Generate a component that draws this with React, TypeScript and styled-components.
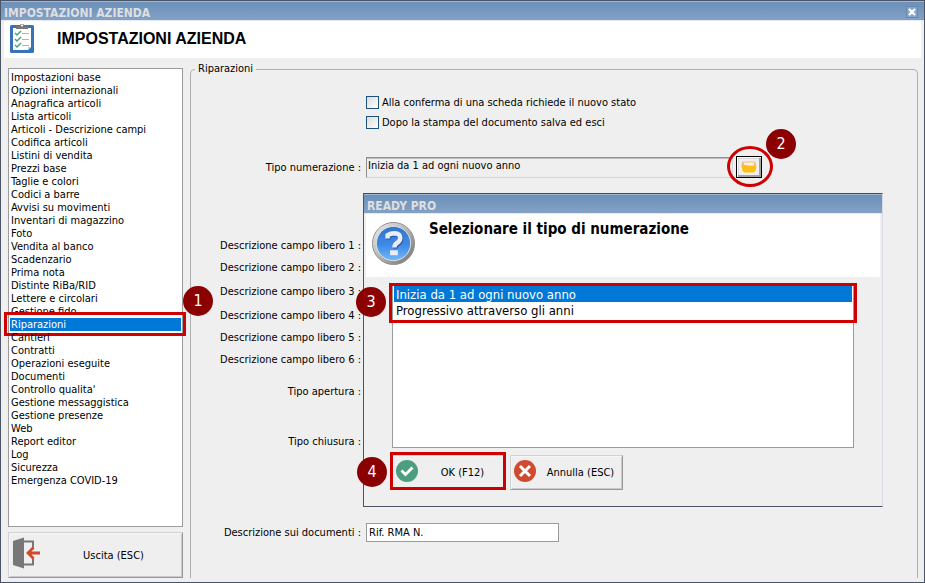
import React, { useState } from "react";
import styled, { createGlobalStyle, css } from "styled-components";

const uiFont = `"DejaVu Sans Condensed", Tahoma, sans-serif`;

const GlobalStyle = createGlobalStyle`
  *, *::before, *::after { box-sizing: border-box; }
  body { margin: 0; background: #efefef; }
  body, button, input { font: 11px/13px ${uiFont}; color: #000; }
`;

const Window = styled.div`
  display: flex;
  flex-direction: column;
  min-height: 100vh;
  border: 1px solid #4b5464;
  background: #efefef;
`;

const TitleBar = styled.div`
  display: flex;
  align-items: center;
  justify-content: space-between;
  height: 20px;
  padding: 4px 6px 0 3px;
  border-top: 1px solid #9fb8d3;
  border-bottom: 1px solid #e3eaf3;
  background: linear-gradient(#6c90b9, #82a1c5);
  color: #dfdfdf;
  font-size: 12px;
  line-height: 14px;
  font-weight: bold;
`;

const CloseButton = styled.button`
  display: flex;
  padding: 1px;
  border: 1px solid #6488b0;
  background: #86a5c7;
  margin-top: -3px;
`;

const Header = styled.header`
  display: flex;
  align-items: center;
  gap: 22px;
  height: 37px;
  margin: 0 3px;
  padding: 0 0 2px 5px;
  background: #fff;
`;

const PageTitle = styled.h1`
  margin: 0;
  font: bold 16px/20px "Liberation Sans", Arial, sans-serif;
`;

const Body = styled.main`
  display: grid;
  grid-template-columns: 175px 1fr;
  gap: 7px;
  flex: 1;
  padding: 4px 6px 4px 7px;
`;

const Sidebar = styled.div`
  display: flex;
  flex-direction: column;
  gap: 5px;
  padding-top: 6px;
`;

const SectionList = styled.ul`
  flex: 1;
  margin: 0;
  padding: 2px 1px;
  list-style: none;
  border: 1px solid #9b9b9b;
  background: #fff;
`;

const Section = styled.li<{ $selected: boolean }>`
  position: relative;
  height: 13px;
  padding-left: 1px;
  white-space: nowrap;
  cursor: default;
  ${(p) => p.$selected && css`background: #0078d7; color: #fff;`}
`;

const raised = css`
  border: 1px solid;
  border-color: #d2d2d2 #999 #999 #d2d2d2;
  box-shadow: inset 1px 1px #f6f6f6, inset -1px -1px #c9c9d0;
  background: #efefef;
`;

const ActionButton = styled.button<{ $large?: boolean }>`
  ${raised}
  display: flex;
  align-items: center;
  height: ${(p) => (p.$large ? "46px" : "35px")};
  width: ${(p) => (p.$large ? "100%" : "113px")};
  padding: ${(p) => (p.$large ? "0 3px 0 4px" : "0 3px")};
`;

const ActionIcon = styled.span`
  display: flex;
  padding-bottom: 4px;
`;

const ActionText = styled.span`
  flex: 1;
  padding-left: 6px;
  text-align: center;
  white-space: nowrap;
`;

const Group = styled.fieldset`
  min-width: 0;
  margin: 0;
  padding: 0;
  border: 1px solid #b0b0b0;
  border-bottom: 0;
  border-radius: 5px 5px 0 0;
`;

const Legend = styled.legend`
  margin-left: 4px;
  padding: 0 3px;
  line-height: 14px;
`;

const Panel = styled.div`
  position: relative;
  display: flex;
  flex-direction: column;
  padding-top: 16px;
`;

const Checks = styled.div`
  display: flex;
  flex-direction: column;
  padding-left: 175px;
  margin-bottom: 24px;
`;

const CheckLabel = styled.label`
  display: flex;
  align-items: center;
  gap: 3px;
  height: 20px;
`;

const CheckBox = styled.input`
  appearance: none;
  width: 13px;
  height: 13px;
  margin: 0;
  border: 1px solid #1c5180;
  background: linear-gradient(135deg, #dcdcd7, #fff);
  &:checked { background: #1c5180; }
`;

const Row = styled.div<{ $height?: number; $after?: number }>`
  display: grid;
  grid-template-columns: 170px 1fr;
  column-gap: 5px;
  align-items: center;
  height: ${(p) => p.$height ?? 22}px;
  margin-bottom: ${(p) => p.$after ?? 0}px;
`;

const FieldLabel = styled.label`
  text-align: right;
  white-space: nowrap;
`;

const TextField = styled.input`
  width: 193px;
  height: 19px;
  padding: 0 2px;
  border: 1px solid #9b9b9b;
  background: #fff;
`;

const Picker = styled.div`
  display: flex;
  align-items: center;
  gap: 3px;
  padding-right: 155px;
`;

const PickerField = styled.input`
  flex: 1;
  min-width: 0;
  height: 21px;
  padding: 0 1px 3px;
  border: 1px solid;
  border-color: #8f8f8f #d4d4dc #d4d4dc #8f8f8f;
  box-shadow: inset 0 1px #c0c0c0;
  background: #efefef;
`;

const PickerButton = styled.button`
  position: relative;
  display: flex;
  align-items: center;
  justify-content: center;
  width: 26px;
  height: 22px;
  padding: 0;
  border: 1px solid #000;
  background: #efefef;
  box-shadow: inset 1px 1px #fff, inset -2px -2px #a3a3a3, inset 2px 2px #d8d8d8;
`;

const ring = css`
  position: absolute;
  pointer-events: none;
  border: 3px solid #cf0000;
`;

const SectionFrame = styled.span`
  ${ring}
  inset: -6px -5px -5px -6px;
`;

const OvalFrame = styled.span`
  ${ring}
  inset: -11px -12px -10px -10px;
  border-radius: 50%;
`;

const OptionsFrame = styled.span`
  ${ring}
  inset: -3px -4px auto -4px;
  height: 40px;
`;

const OkFrame = styled.span`
  ${ring}
  inset: -3px -1px 0 -2px;
`;

const Step = styled.span<{ $x: number; $y: number }>`
  position: absolute;
  left: ${(p) => p.$x}px;
  top: ${(p) => p.$y}px;
  z-index: 2;
  width: 30px;
  height: 30px;
  border-radius: 50%;
  background: #8b0000;
  color: #fff;
  font-size: 16px;
  line-height: 30px;
  text-align: center;
`;

const Dialog = styled.section`
  position: absolute;
  top: 117px;
  left: 172px;
  right: 34px;
  border: 1px solid;
  border-color: #3d4c5e #d9d9e4 #4b5464 #4b5464;
  background: #efefef;
`;

const DialogHead = styled.div`
  display: flex;
  gap: 13px;
  height: 63px;
  margin: 0 2px;
  padding: 7px 5px;
  background: #fff;
`;

const DialogTitle = styled.h2`
  margin: 0;
  font-size: 15px;
  line-height: 16px;
`;

const DialogBody = styled.div`
  display: flex;
  flex-direction: column;
  gap: 7px;
  padding: 8px 28px 16px;
`;

const Options = styled.ul`
  position: relative;
  height: 163px;
  margin: 0;
  padding: 0;
  list-style: none;
  border: 1px solid #9b9b9b;
  background: #fff;
`;

const Option = styled.li<{ $selected: boolean }>`
  height: 16px;
  margin: 0 1px;
  padding-left: 2px;
  font-size: 13px;
  line-height: 18px;
  white-space: nowrap;
  cursor: default;
  ${(p) => p.$selected && css`background: #0078d7; color: #fff;`}
`;

const Buttons = styled.div`
  display: flex;
  gap: 5px;
`;

const ButtonSlot = styled.div`
  position: relative;
`;

const CloseIcon = () => (
  <svg width="8" height="8" viewBox="0 0 8 8" aria-hidden="true">
    <path d="M1 1l6 6M7 1L1 7" stroke="#fff" strokeWidth="2.2" />
  </svg>
);

const ClipboardIcon = () => (
  <svg width="26" height="31" viewBox="0 0 26 31" aria-hidden="true">
    <rect x="1" y="2" width="24" height="28" rx="1.5" fill="#3674b5" />
    <path d="M4 5h18v19l-3 3H4z" fill="#fff" />
    <path d="M19 27v-3h3z" fill="#bcd0e6" />
    <path d="M7 6V3h3a3.2 3.2 0 0 1 6 0h3v3z" fill="#777" />
    <circle cx="13" cy="2.6" r="1.1" fill="#fff" />
    {[10, 16, 22].map((y) => (
      <g key={y} fill="none">
        <path d={`M6 ${y}l2 2 4-4`} stroke="#4ba37e" strokeWidth="1.5" />
        <path d={`M13 ${y + 0.5}h7`} stroke="#b5b5b5" />
      </g>
    ))}
  </svg>
);

const ExitIcon = () => (
  <svg width="29" height="32" viewBox="0 0 29 32" aria-hidden="true">
    <path d="M11 4.500h9v7M20 20v7.500h-9" fill="none" stroke="#777" strokeWidth="2" />
    <path d="M0 4l11-3.500v31L0 28z" fill="#777" />
    <path d="M27 16H15M20.500 10.500L15 16l5.500 5.500" fill="none" stroke="#d04a2c" strokeWidth="2.800" />
  </svg>
);

const FolderIcon = () => (
  <svg width="16" height="12" viewBox="0 0 16 12" aria-hidden="true">
    <path d="M1.500.5h12.500l1 2v3H.5v-3z" fill="#f8b98a" />
    <path d="M3 1.500h10v3H3z" fill="#fff3df" />
    <path d="M.5 4h4.500l1.500 1h9L14.500 10l-2 1.500h-9L1.500 10z" fill="#fcbf16" />
  </svg>
);

const QuestionIcon = () => (
  <svg width="45" height="45" viewBox="0 0 46 46" aria-hidden="true">
    <defs>
      <linearGradient id="rim" x1="0" y1="0" x2="1" y2="1">
        <stop offset="0" stopColor="#f2f2f2" />
        <stop offset=".5" stopColor="#b4b4b4" />
        <stop offset="1" stopColor="#6d6d6d" />
      </linearGradient>
      <linearGradient id="disc" x1="0" y1="0" x2="0" y2="1">
        <stop offset="0" stopColor="#2f74d0" />
        <stop offset=".55" stopColor="#3f8be4" />
        <stop offset="1" stopColor="#72b8fb" />
      </linearGradient>
    </defs>
    <circle cx="23" cy="23" r="21.500" fill="url(#rim)" stroke="#8d8d8d" />
    <circle cx="23" cy="23" r="17.500" fill="url(#disc)" stroke="#d9dde4" />
    <path d="M17 18v-3.500q3-2 7-2 6 .3 6 5 0 3-3.500 5-2.500 1.500-2.500 4.500" fill="none" stroke="#1f5cab" strokeWidth="4.500" transform="translate(1 1)" />
    <path d="M17 18v-3.500q3-2 7-2 6 .3 6 5 0 3-3.500 5-2.500 1.500-2.500 4.500" fill="none" stroke="#ecebfa" strokeWidth="4.500" />
    <path d="M19.500 30h8v5h-8z" fill="#ecebfa" />
  </svg>
);

const OkIcon = () => (
  <svg width="22" height="22" viewBox="0 0 22 22" aria-hidden="true">
    <circle cx="11" cy="11" r="11" fill="#4b9f7c" />
    <path d="M5.500 10.500l4 4 7-7" fill="none" stroke="#fff" strokeWidth="2.800" />
  </svg>
);

const CancelIcon = () => (
  <svg width="22" height="22" viewBox="0 0 22 22" aria-hidden="true">
    <circle cx="11" cy="11" r="11" fill="#d04a30" />
    <path d="M6 6l10 10M16 6L6 16" stroke="#fff" strokeWidth="3" />
  </svg>
);

const sections = [
  "Impostazioni base", "Opzioni internazionali", "Anagrafica articoli", "Lista articoli",
  "Articoli - Descrizione campi", "Codifica articoli", "Listini di vendita", "Prezzi base",
  "Taglie e colori", "Codici a barre", "Avvisi su movimenti", "Inventari di magazzino", "Foto",
  "Vendita al banco", "Scadenzario", "Prima nota", "Distinte RiBa/RID", "Lettere e circolari",
  "Gestione fido", "Riparazioni", "Cantieri", "Contratti", "Operazioni eseguite", "Documenti",
  "Controllo qualita'", "Gestione messaggistica", "Gestione presenze", "Web", "Report editor",
  "Log", "Sicurezza", "Emergenza COVID-19",
];

const numbering = ["Inizia da 1 ad ogni nuovo anno", "Progressivo attraverso gli anni"];

const fields = [
  { id: "libero1", label: "Descrizione campo libero 1 :" },
  { id: "libero2", label: "Descrizione campo libero 2 :" },
  { id: "libero3", label: "Descrizione campo libero 3 :", height: 26 },
  { id: "libero4", label: "Descrizione campo libero 4 :" },
  { id: "libero5", label: "Descrizione campo libero 5 :" },
  { id: "libero6", label: "Descrizione campo libero 6 :", after: 10 },
  { id: "apertura", label: "Tipo apertura :", after: 28 },
  { id: "chiusura", label: "Tipo chiusura :", after: 69 },
];

export default function App() {
  const [choice, setChoice] = useState(0);
  return (
    <Window>
      <GlobalStyle />
      <TitleBar>
        IMPOSTAZIONI AZIENDA
        <CloseButton aria-label="Chiudi"><CloseIcon /></CloseButton>
      </TitleBar>
      <Header>
        <ClipboardIcon />
        <PageTitle>IMPOSTAZIONI AZIENDA</PageTitle>
      </Header>
      <Body>
        <Sidebar>
          <SectionList role="listbox" aria-label="Sezioni">
            {sections.map((name) => {
              const selected = name === "Riparazioni";
              return (
                <Section key={name} role="option" aria-selected={selected} $selected={selected}>
                  {name}
                  {selected && <SectionFrame />}
                  {selected && <Step $x={173} $y={-32}>1</Step>}
                </Section>
              );
            })}
          </SectionList>
          <ActionButton $large>
            <ActionIcon><ExitIcon /></ActionIcon>
            <ActionText>Uscita (ESC)</ActionText>
          </ActionButton>
        </Sidebar>
        <Group>
          <Legend>Riparazioni</Legend>
          <Panel>
            <Checks>
              <CheckLabel><CheckBox type="checkbox" />Alla conferma di una scheda richiede il nuovo stato</CheckLabel>
              <CheckLabel><CheckBox type="checkbox" />Dopo la stampa del documento salva ed esci</CheckLabel>
            </Checks>
            <Row $after={56}>
              <FieldLabel htmlFor="numerazione">Tipo numerazione :</FieldLabel>
              <Picker>
                <PickerField id="numerazione" readOnly value={numbering[choice]} />
                <PickerButton aria-label="Seleziona">
                  <FolderIcon />
                  <OvalFrame />
                  <Step $x={29} $y={-28}>2</Step>
                </PickerButton>
              </Picker>
            </Row>
            {fields.map((f) => (
              <Row key={f.id} $height={f.height} $after={f.after}>
                <FieldLabel htmlFor={f.id}>{f.label}</FieldLabel>
                <TextField id={f.id} />
              </Row>
            ))}
            <Row>
              <FieldLabel htmlFor="documenti">Descrizione sui documenti :</FieldLabel>
              <TextField id="documenti" defaultValue="Rif. RMA N." />
            </Row>
            <Dialog role="dialog" aria-labelledby="dialog-title">
              <TitleBar>READY PRO</TitleBar>
              <DialogHead>
                <QuestionIcon />
                <DialogTitle id="dialog-title">Selezionare il tipo di numerazione</DialogTitle>
              </DialogHead>
              <DialogBody>
                <Options role="listbox" aria-labelledby="dialog-title">
                  {numbering.map((text, i) => (
                    <Option
                      key={text}
                      role="option"
                      aria-selected={i === choice}
                      $selected={i === choice}
                      onClick={() => setChoice(i)}
                    >
                      {text}
                    </Option>
                  ))}
                  <OptionsFrame />
                  <Step $x={-37} $y={1}>3</Step>
                </Options>
                <Buttons>
                  <ButtonSlot>
                    <ActionButton>
                      <ActionIcon><OkIcon /></ActionIcon>
                      <ActionText>OK (F12)</ActionText>
                    </ActionButton>
                    <OkFrame />
                    <Step $x={-35} $y={2}>4</Step>
                  </ButtonSlot>
                  <ActionButton>
                    <ActionIcon><CancelIcon /></ActionIcon>
                    <ActionText>Annulla (ESC)</ActionText>
                  </ActionButton>
                </Buttons>
              </DialogBody>
            </Dialog>
          </Panel>
        </Group>
      </Body>
    </Window>
  );
}
